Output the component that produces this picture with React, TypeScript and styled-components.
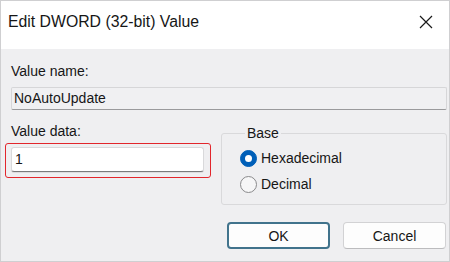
import styled, { createGlobalStyle } from 'styled-components';

const GlobalStyle = createGlobalStyle`
  html, body {
    margin: 0;
    padding: 0;
    background: #ffffff;
  }
  * {
    box-sizing: border-box;
  }
`;

const Window = styled.div`
  width: 450px;
  height: 262px;
  border: 1px solid #cfcfd1;
  display: flex;
  flex-direction: column;
  font-family: "Liberation Sans", Arial, sans-serif;
  color: #161616;
  overflow: hidden;
`;

const TitleBar = styled.div`
  height: 48px;
  flex-shrink: 0;
  background: #ffffff;
  display: flex;
  align-items: flex-start;
  justify-content: space-between;
  padding: 12px 16px 0 7px;
`;

const Title = styled.div`
  font-size: 15.8px;
  line-height: 18px;
`;

const CloseIcon = styled.svg`
  margin-top: 2px;
  display: block;
`;

const Body = styled.div`
  flex: 1;
  background: #efeff1;
  padding: 0 2px 0 10px;
`;

const Label = styled.div<{ $top: number }>`
  font-size: 14px;
  line-height: 16px;
  margin-top: ${(p) => p.$top}px;
`;

const ReadOnlyField = styled.div`
  margin-top: 8px;
  height: 23px;
  line-height: 21px;
  font-size: 14px;
  padding-left: 2px;
  background: #f0f0f2;
  border: 1px solid #d6d6d8;
  border-bottom-color: #9a9a9c;
  border-radius: 2px;
`;

const LowerRow = styled.div`
  display: flex;
  align-items: flex-start;
  margin-top: 13px;
`;

const LeftColumn = styled.div`
  width: 200px;
`;

const Highlight = styled.div`
  margin: 4px 0 0 -6px;
  width: 206px;
  border: 1px solid #e2262c;
  border-radius: 3px;
  padding: 3px 6px 5px 5px;
`;

const Input = styled.div`
  height: 25px;
  line-height: 23px;
  font-size: 14px;
  padding-left: 3px;
  background: #ffffff;
  border: 1px solid #d9d9db;
  border-bottom: 1px solid #7a7a7c;
  border-radius: 3px;
  box-shadow: 0 1px 0 rgba(0, 0, 0, 0.08);
`;

const GroupBox = styled.fieldset`
  margin: 2px 0 0 10px;
  width: 227px;
  height: 80px;
  border: 1px solid #d9d9db;
  border-radius: 3px;
  padding: 7px 0 0 18px;
  min-width: 0;
`;

const Legend = styled.legend`
  font-size: 14px;
  line-height: 16px;
  padding: 0 2px;
  margin-left: 5px;
`;

const RadioRow = styled.label`
  display: flex;
  align-items: center;
  height: 20px;
  font-size: 14px;
  gap: 4px;
  & + & {
    margin-top: 6px;
  }
`;

const RadioDot = styled.span<{ $checked?: boolean }>`
  width: 17px;
  height: 17px;
  border-radius: 50%;
  flex-shrink: 0;
  display: flex;
  align-items: center;
  justify-content: center;
  background: ${(p) => (p.$checked ? '#005fb8' : '#f6f6f7')};
  border: 1px solid ${(p) => (p.$checked ? '#005fb8' : '#8a8a8c')};
  &::after {
    content: '';
    display: ${(p) => (p.$checked ? 'block' : 'none')};
    width: 7px;
    height: 7px;
    border-radius: 50%;
    background: #ffffff;
  }
`;

const ButtonRow = styled.div`
  display: flex;
  justify-content: flex-end;
  gap: 13px;
  margin-top: 17px;
  padding-right: 1px;
`;

const Button = styled.button<{ $primary?: boolean }>`
  width: 103px;
  height: 27px;
  font-family: "Liberation Sans", Arial, sans-serif;
  font-size: 14px;
  color: #161616;
  background: #fdfdfd;
  border-radius: 4px;
  border: ${(p) => (p.$primary ? '2px solid #41738c' : '1px solid #d2d2d4')};
  border-bottom-color: ${(p) => (p.$primary ? '#41738c' : '#bcbcbe')};
  padding: 0;
`;

export default function App() {
  return (
    <>
      <GlobalStyle />
      <Window>
        <TitleBar>
          <Title>Edit DWORD (32-bit) Value</Title>
          <CloseIcon width="14" height="14" viewBox="0 0 14 14">
            <path d="M1 1 L13 13 M13 1 L1 13" stroke="#1a1a1a" strokeWidth="1.2" fill="none" />
          </CloseIcon>
        </TitleBar>
        <Body>
          <Label $top={14}>Value name:</Label>
          <ReadOnlyField>NoAutoUpdate</ReadOnlyField>
          <LowerRow>
            <LeftColumn>
              <Label $top={0}>Value data:</Label>
              <Highlight>
                <Input>1</Input>
              </Highlight>
            </LeftColumn>
            <GroupBox>
              <Legend>Base</Legend>
              <RadioRow>
                <RadioDot $checked />
                Hexadecimal
              </RadioRow>
              <RadioRow>
                <RadioDot />
                Decimal
              </RadioRow>
            </GroupBox>
          </LowerRow>
          <ButtonRow>
            <Button $primary>OK</Button>
            <Button>Cancel</Button>
          </ButtonRow>
        </Body>
      </Window>
    </>
  );
}
